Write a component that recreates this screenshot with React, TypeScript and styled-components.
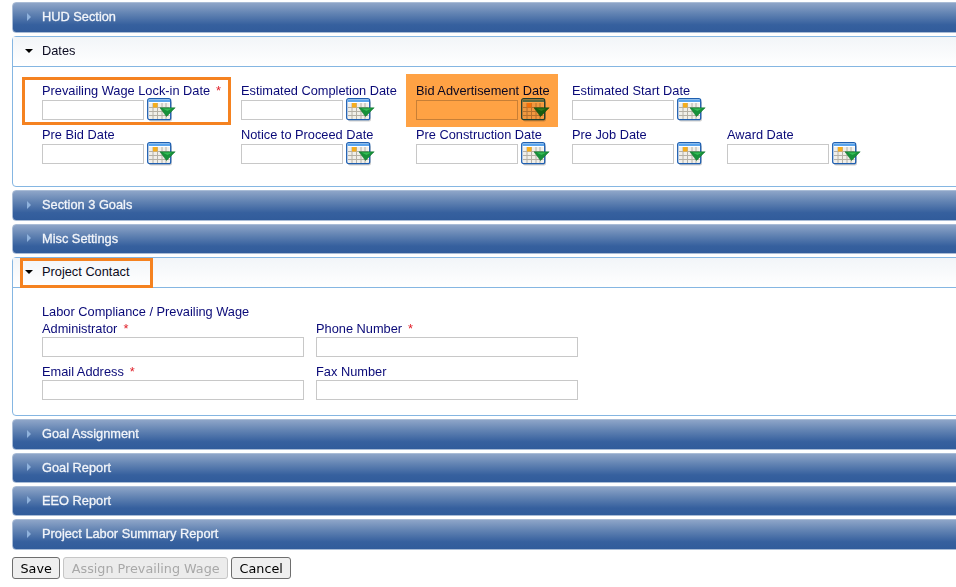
import React from "react";
import styled, { createGlobalStyle } from "styled-components";

const GlobalStyle = createGlobalStyle`
  html, body {
    margin: 0;
    padding: 0;
    background: #fff;
    overflow: hidden;
  }
  *, *::after {
    box-sizing: border-box;
  }
`;

const CalendarIcon = () => (
  <svg width="29" height="24" viewBox="0 0 29 24">
    <rect x="2" y="3" width="23" height="20.5" rx="2" fill="#cfcfcf" />
    <rect x="0.7" y="0.7" width="23" height="21" rx="2" fill="#fff" stroke="#1f5fb0" strokeWidth="1.3" />
    <rect x="1.5" y="1.5" width="21.5" height="2.5" fill="#5aa4ec" />
    <rect x="2" y="5" width="20.5" height="16" fill="#f1efe9" />
    <path d="M2 9.5H22.5M2 13.5H22.5M2 17.5H22.5M6 5V21M10.5 5V21M15 5V21M19 5V21" stroke="#b4b0a6" strokeWidth="1" />
    <rect x="6" y="5" width="4.5" height="4.5" fill="#f5ae1e" />
    <path d="M13 9.8H28.2L19.5 18.5Z" fill="#17913a" stroke="#0d6e2a" strokeWidth="0.5" />
    <path d="M15.5 10.5H25L20.5 13Z" fill="#35bb55" />
  </svg>
);

const Page = styled.div`
  width: 1000px;
  padding: 2px 0 0 12px;
  font-family: "Liberation Sans", Arial, sans-serif;
`;

const ClosedHeader = styled.div<{ $short?: boolean }>`
  height: ${(p) => (p.$short ? "30px" : "31px")};
  margin-bottom: 3px;
  display: flex;
  align-items: center;
  gap: 11px;
  padding: 0 0 2px 14px;
  border: 1px solid #a9bcd6;
  border-radius: 4px 0 0 4px;
  background: linear-gradient(to bottom, #8ea5c8 0%, #6384b3 35%, #36609e 75%, #315c9b 100%);
  color: #f2f5fa;
  font-size: 12.8px;
  -webkit-text-stroke: 0.3px #f2f5fa;
`;

const ClosedArrow = styled.span`
  width: 0;
  height: 0;
  border-left: 4px solid #8fb2dc;
  border-top: 4px solid transparent;
  border-bottom: 4px solid transparent;
`;

const Panel = styled.section`
  margin-bottom: 3px;
  border: 1px solid #85b6e2;
  border-radius: 4px 0 0 4px;
`;

const OpenHeader = styled.div`
  position: relative;
  height: 30px;
  display: flex;
  align-items: center;
  gap: 9px;
  padding: 0 0 2px 12px;
  border-bottom: 1px solid #85b6e2;
  background: linear-gradient(to bottom, #f2f5f8, #ffffff);
  color: #0b0b20;
  font-size: 12.8px;
`;

const OpenArrow = styled.span`
  width: 0;
  height: 0;
  border-top: 4px solid #000;
  border-left: 4px solid transparent;
  border-right: 4px solid transparent;
`;

const HeaderHighlight = styled.span`
  position: absolute;
  left: 7px;
  top: 0;
  width: 133px;
  height: 30px;
  border: 3px solid #f58220;
`;

const DatesGrid = styled.div`
  display: grid;
  grid-template-columns: 199px 175px 156px 155px 160px;
  row-gap: 7px;
  padding: 16px 0 22px 29px;
`;

const DateField = styled.div<{ $mark?: "outline" | "fill" }>`
  position: relative;
  height: 37px;

  ${(p) =>
    p.$mark === "outline" &&
    `&::after {
      content: "";
      position: absolute;
      left: -20px;
      top: -6px;
      width: 209px;
      height: 48px;
      border: 3px solid #f58220;
    }`}

  ${(p) =>
    p.$mark === "fill" &&
    `&::after {
      content: "";
      position: absolute;
      left: -10px;
      top: -9px;
      width: 152px;
      height: 53px;
      background: #ffa244;
      mix-blend-mode: multiply;
    }`}
`;

const Label = styled.label`
  display: block;
  color: #0a0a78;
  font-size: 12.8px;
  line-height: 17px;
  white-space: nowrap;
`;

const DateLabel = styled(Label)`
  line-height: 15px;
  margin-bottom: 2px;
`;

const Required = styled.span`
  color: #e0202a;
  margin-left: 6px;
`;

const DateRow = styled.div`
  display: flex;
  align-items: flex-start;
  gap: 3px;
`;

const DateInput = styled.input`
  width: 102px;
  height: 20px;
  border: 1px solid #c8c8c8;
  background: #fff;
  outline: none;
`;

const DateIconSlot = styled.span`
  display: block;
  margin-top: -2px;
  height: 24px;
`;

const ContactGrid = styled.div`
  display: grid;
  grid-template-columns: 262px 262px;
  column-gap: 12px;
  row-gap: 6px;
  padding: 15px 0 15px 29px;
  align-items: end;
`;

const ContactField = styled.div``;

const ContactInput = styled.input`
  display: block;
  width: 100%;
  height: 20px;
  border: 1px solid #c8c8c8;
  background: #fff;
  outline: none;
`;

const ButtonRow = styled.div`
  display: flex;
  gap: 3px;
  margin-top: 7px;
`;

const Button = styled.button`
  height: 22px;
  padding: 0 7.5px;
  border: 1px solid #6e6e6e;
  border-radius: 3px;
  background: #efefef;
  color: #000;
  font-family: "DejaVu Sans", Verdana, sans-serif;
  font-size: 12.75px;

  &:disabled {
    border-color: #c6c6c6;
    background: #ececec;
    color: #a8a8a8;
  }
`;

const Closed = ({ title, short }: { title: string; short?: boolean }) => (
  <ClosedHeader $short={short}>
    <ClosedArrow />
    {title}
  </ClosedHeader>
);

const dates: { label: string; required?: boolean; mark?: "outline" | "fill" }[] = [
  { label: "Prevailing Wage Lock-in Date", required: true, mark: "outline" },
  { label: "Estimated Completion Date" },
  { label: "Bid Advertisement Date", mark: "fill" },
  { label: "Estimated Start Date" },
  { label: "" },
  { label: "Pre Bid Date" },
  { label: "Notice to Proceed Date" },
  { label: "Pre Construction Date" },
  { label: "Pre Job Date" },
  { label: "Award Date" },
];

const App = () => {
  return (
    <>
      <GlobalStyle />
      <Page>
        <Closed title="HUD Section" />
        <Panel>
          <OpenHeader>
            <OpenArrow />
            Dates
          </OpenHeader>
          <DatesGrid>
            {dates.map((d, i) =>
              d.label ? (
                <DateField key={i} $mark={d.mark}>
                  <DateLabel>
                    {d.label}
                    {d.required && <Required>*</Required>}
                  </DateLabel>
                  <DateRow>
                    <DateInput />
                    <DateIconSlot>
                      <CalendarIcon />
                    </DateIconSlot>
                  </DateRow>
                </DateField>
              ) : (
                <div key={i} />
              )
            )}
          </DatesGrid>
        </Panel>
        <Closed title="Section 3 Goals" />
        <Closed title="Misc Settings" short />
        <Panel>
          <OpenHeader>
            <OpenArrow />
            Project Contact
            <HeaderHighlight />
          </OpenHeader>
          <ContactGrid>
            <ContactField>
              <Label>
                Labor Compliance / Prevailing Wage
                <br />
                Administrator<Required>*</Required>
              </Label>
              <ContactInput />
            </ContactField>
            <ContactField>
              <Label>
                Phone Number<Required>*</Required>
              </Label>
              <ContactInput />
            </ContactField>
            <ContactField>
              <Label>
                Email Address<Required>*</Required>
              </Label>
              <ContactInput />
            </ContactField>
            <ContactField>
              <Label>Fax Number</Label>
              <ContactInput />
            </ContactField>
          </ContactGrid>
        </Panel>
        <Closed title="Goal Assignment" />
        <Closed title="Goal Report" short />
        <Closed title="EEO Report" short />
        <Closed title="Project Labor Summary Report" />
        <ButtonRow>
          <Button>Save</Button>
          <Button disabled>Assign Prevailing Wage</Button>
          <Button>Cancel</Button>
        </ButtonRow>
      </Page>
    </>
  );
};

export default App;
